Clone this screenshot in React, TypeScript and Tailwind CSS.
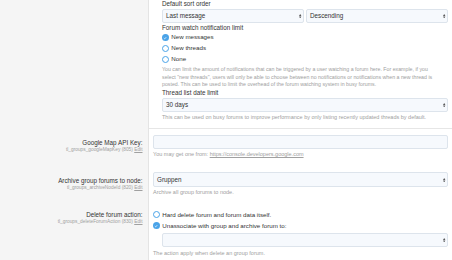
import React from "react";

const Arrow = () => (
  <svg width="2.4" height="4.4" viewBox="0 0 2.4 4.4" className="shrink-0">
    <polygon points="0,1.9 1.2,0 2.4,1.9" fill="#555" />
    <polygon points="0,2.5 1.2,4.4 2.4,2.5" fill="#555" />
  </svg>
);

const Select = ({ value, h = "h-[14.5px]" }: { value?: string; h?: string }) => (
  <div
    className={`flex items-center justify-between ${h} rounded-[2px] border border-[#dde4ec] bg-[#f6f9fd] pl-[3px] pr-[1.5px] text-[6.3px] leading-none text-[#333]`}
  >
    <span>{value ?? ""}</span>
    <Arrow />
  </div>
);

const Radio = ({ checked, label }: { checked?: boolean; label: string }) => (
  <div className="flex h-[11px] items-center gap-[2.7px] text-[6.2px] leading-none text-[#333]">
    {checked ? (
      <span className="flex h-[6.6px] w-[6.6px] shrink-0 items-center justify-center rounded-full bg-[#4aa3e8]">
        <svg width="4" height="4" viewBox="0 0 10 10">
          <path d="M2 5.2 L4.2 7.3 L8 3" fill="none" stroke="#fff" strokeWidth="1.8" />
        </svg>
      </span>
    ) : (
      <span className="h-[6.6px] w-[6.6px] shrink-0 rounded-full border border-[#4aa3e8] bg-white" />
    )}
    <span>{label}</span>
  </div>
);

const LeftLabel = ({ label, sub, pt }: { label: string; sub: string; pt: string }) => (
  <div className={`w-[149px] shrink-0 border-r border-[#e4e4e4] bg-[#f5f5f5] pr-[5.5px] text-right ${pt}`}>
    <div className="h-[9px] text-[6.3px] leading-[9px] text-[#333]">{label}</div>
    <div className="h-[6px] whitespace-nowrap text-[4.8px] leading-[6px] text-[#a0a0a0]">
      {sub} <span className="underline">Edit</span>
    </div>
  </div>
);

export default function App() {
  return (
    <div className="h-[260px] w-[452px] overflow-hidden bg-white font-['Liberation_Sans',Arial,sans-serif]">
      {/* Top section */}
      <div className="flex h-[129px]">
        <div className="w-[149px] shrink-0 border-r border-[#e4e4e4] bg-[#f5f5f5]" />
        <div className="box-border h-[129px] flex-1 border-b border-[#e6e6e6] pl-[13px] pr-[4px]">
          <div className="h-[8.5px] text-[6.3px] leading-[8.5px] text-[#333]">Default sort order</div>
          <div className="flex gap-[2px]">
            <div className="flex-1">
              <Select value="Last message" />
            </div>
            <div className="flex-1">
              <Select value="Descending" />
            </div>
          </div>
          <div className="h-[9px] text-[6.3px] leading-[9px] text-[#333]">Forum watch notification limit</div>
          <Radio checked label="New messages" />
          <Radio label="New threads" />
          <Radio label="None" />
          <div className="mt-[1.3px] whitespace-nowrap text-[5.25px] leading-[7.33px] text-[#a0a0a0]">
            You can limit the amount of notifications that can be triggered by a user watching a forum here. For example, if you
            <br />
            select "new threads", users will only be able to choose between no notifications or notifications when a new thread is
            <br />
            posted. This can be used to limit the overhead of the forum watching system in busy forums.
          </div>
          <div className="h-[9.4px] text-[6.3px] leading-[9.4px] text-[#333]">Thread list date limit</div>
          <Select value="30 days" />
          <div className="h-[11.6px] whitespace-nowrap text-[5.5px] leading-[11.6px] text-[#a0a0a0]">
            This can be used on busy forums to improve performance by only listing recently updated threads by default.
          </div>
        </div>
      </div>

      {/* Google Map API Key */}
      <div className="flex h-[37px]">
        <LeftLabel label="Google Map API Key:" sub="tl_groups_googleMapKey (805)" pt="pt-[9.2px]" />
        <div className="flex-1 pl-[4px] pr-[4px] pt-[5.7px]">
          <div className="h-[14.6px] rounded-[2px] border border-[#dde4ec] bg-[#f6f9fd]" />
          <div className="h-[11.4px] whitespace-nowrap text-[5.5px] leading-[11.4px] text-[#a0a0a0]">
            You may get one from: <span className="underline">https://console.developers.google.com</span>
          </div>
        </div>
      </div>

      {/* Archive group forums */}
      <div className="flex h-[38px]">
        <LeftLabel label="Archive group forums to node:" sub="tl_groups_archiveNodeId (820)" pt="pt-[9.5px]" />
        <div className="flex-1 pl-[4px] pr-[4px] pt-[6.3px]">
          <Select value="Gruppen" h="h-[15px]" />
          <div className="h-[10.8px] whitespace-nowrap text-[5.5px] leading-[10.8px] text-[#a0a0a0]">
            Archive all group forums to node.
          </div>
        </div>
      </div>

      {/* Delete forum action */}
      <div className="flex h-[56px]">
        <LeftLabel label="Delete forum action:" sub="tl_groups_deleteForumAction (830)" pt="pt-[5.8px]" />
        <div className="flex-1 pl-[4px] pr-[4px] pt-[5.2px]">
          <Radio label="Hard delete forum and forum data itself." />
          <Radio checked label="Unassociate with group and archive forum to:" />
          <div className="ml-[9.3px] mt-[1.5px]">
            <Select h="h-[14.6px]" />
          </div>
          <div className="h-[12px] whitespace-nowrap text-[5.5px] leading-[12px] text-[#a0a0a0]">
            The action apply when delete an group forum.
          </div>
        </div>
      </div>
    </div>
  );
}
